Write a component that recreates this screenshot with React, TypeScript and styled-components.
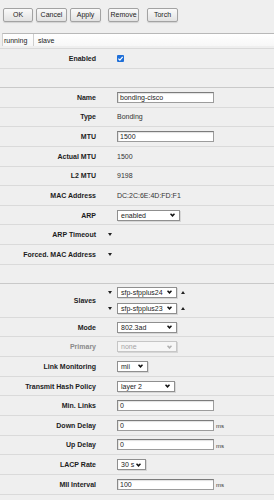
import React from "react";
import styled, { createGlobalStyle } from "styled-components";

const GlobalStyle = createGlobalStyle`
  html, body { margin: 0; padding: 0; }
  body {
    background: #efefef;
    font-family: "Liberation Sans", Arial, sans-serif;
    color: #222;
  }
`;

const Page = styled.div`
  width: 274px;
  height: 500px;
  overflow: hidden;
  background: #efefef;
`;

const Toolbar = styled.div`
  display: flex;
  align-items: flex-start;
  height: 33px;
  box-sizing: border-box;
  padding: 8px 0 0 3px;
`;

const Button = styled.button<{ $w?: number; $ml?: number }>`
  width: ${(p) => p.$w ?? 31}px;
  height: 14px;
  margin: 0 0 0 ${(p) => p.$ml ?? 0}px;
  padding: 0;
  box-sizing: border-box;
  border: 1px solid #a3a3a3;
  border-radius: 2px;
  background: linear-gradient(#fafafa, #e2e2e2);
  box-shadow: 0 1px 1px rgba(0, 0, 0, 0.12);
  font-family: "Liberation Sans", Arial, sans-serif;
  font-size: 7px;
  line-height: 12px;
  color: #222;
`;

const StatusBar = styled.div`
  display: flex;
  align-items: center;
  height: 13px;
  box-sizing: border-box;
  margin: 0 0 2px 2px;
  border-top: 1px solid #b8b8b8;
  border-left: 1px solid #d0d0d0;
  background: linear-gradient(#ffffff, #f7f7f7);
  font-size: 7px;
  color: #222;
`;

const StatusCell = styled.div<{ $w?: number; $sep?: boolean }>`
  height: 100%;
  display: flex;
  align-items: center;
  box-sizing: border-box;
  ${(p) => (p.$w ? `width: ${p.$w}px;` : "")}
  padding-left: ${(p) => (p.$sep ? 1 : 4)}px;
  border-right: ${(p) => (p.$sep ? "1px solid #cfcfcf" : "none")};
`;

const Form = styled.div`
  border-top: 1px solid #d9d9d9;
`;

const Row = styled.div<{ $h?: number; $strong?: boolean }>`
  display: grid;
  grid-template-columns: 96px 21px 1fr;
  align-items: center;
  height: ${(p) => p.$h ?? 19.65}px;
  box-sizing: border-box;
  border-bottom: 1px solid ${(p) => (p.$strong ? "#c9c9c9" : "#dadada")};
`;

const Label = styled.div<{ $disabled?: boolean }>`
  text-align: right;
  font-weight: bold;
  font-size: 7px;
  white-space: nowrap;
  color: ${(p) => (p.$disabled ? "#8a8a8a" : "#1c1c1c")};
`;

const Toggle = styled.div`
  display: flex;
  justify-content: flex-end;
  padding-right: 5px;
`;

const TriDown = styled.span`
  display: inline-block;
  width: 0;
  height: 0;
  border-left: 2.5px solid transparent;
  border-right: 2.5px solid transparent;
  border-top: 3px solid #222;
`;

const TriUp = styled.span`
  display: inline-block;
  width: 0;
  height: 0;
  border-left: 2.5px solid transparent;
  border-right: 2.5px solid transparent;
  border-bottom: 3px solid #222;
`;

const Value = styled.div`
  display: flex;
  align-items: center;
  gap: 2px;
  font-size: 7px;
  color: #333;
  white-space: nowrap;
`;

const TextInput = styled.div`
  width: 97px;
  height: 11px;
  box-sizing: border-box;
  border: 1px solid #9c9c9c;
  border-top-color: #7c7c7c;
  border-left-color: #8a8a8a;
  background: #fff;
  box-shadow: inset 1px 1px 1px rgba(0, 0, 0, 0.12);
  padding-left: 2px;
  font-size: 7px;
  line-height: 9px;
  color: #222;
`;

const Unit = styled.span`
  font-size: 6px;
  color: #333;
  margin-top: 2px;
`;

const SelectBox = styled.div<{ $w: number; $disabled?: boolean }>`
  width: ${(p) => p.$w}px;
  height: 11px;
  box-sizing: border-box;
  display: flex;
  align-items: center;
  justify-content: space-between;
  padding: 0 4px 0 3px;
  border: 1px solid ${(p) => (p.$disabled ? "#c6c6c6" : "#8f8f8f")};
  background: ${(p) => (p.$disabled ? "#f6f6f6" : "#fff")};
  box-shadow: 1px 1px 0 rgba(0, 0, 0, 0.1);
  font-size: 7px;
  color: ${(p) => (p.$disabled ? "#a5a5a5" : "#222")};
`;

const Check = styled.div`
  width: 7px;
  height: 7px;
  margin-top: -1px;
`;

const SlaveList = styled.div`
  grid-column: 2 / 4;
  display: flex;
  flex-direction: column;
  gap: 5px;
`;

const SlaveLine = styled.div`
  display: grid;
  grid-template-columns: 21px auto 1fr;
  align-items: center;
`;

const UpWrap = styled.div`
  padding-left: 4px;
  display: flex;
  align-items: center;
`;

const Chevron = ({ color }: { color: string }) => (
  <svg width="5" height="4" viewBox="0 0 5 4">
    <path d="M0.5 0.7 L2.5 2.8 L4.5 0.7" fill="none" stroke={color} strokeWidth="1.5" />
  </svg>
);

const Select = ({ w, text, disabled }: { w: number; text: string; disabled?: boolean }) => (
  <SelectBox $w={w} $disabled={disabled}>
    <span>{text}</span>
    <Chevron color={disabled ? "#b0b0b0" : "#111"} />
  </SelectBox>
);

export default function App() {
  return (
    <Page>
      <GlobalStyle />
      <Toolbar>
        <Button $w={30}>OK</Button>
        <Button $ml={3}>Cancel</Button>
        <Button $ml={3}>Apply</Button>
        <Button $ml={7}>Remove</Button>
        <Button $ml={8}>Torch</Button>
      </Toolbar>
      <StatusBar>
        <StatusCell $w={31} $sep>running</StatusCell>
        <StatusCell>slave</StatusCell>
      </StatusBar>
      <Form>
        <Row $h={20}>
          <Label>Enabled</Label>
          <span />
          <Value>
            <Check>
              <svg width="7" height="7" viewBox="0 0 7 7">
                <rect x="0" y="0" width="7" height="7" rx="1" fill="#1f6fd8" />
                <path d="M1.4 3.6 L2.9 5.1 L5.7 1.8" fill="none" stroke="#fff" strokeWidth="1.2" />
              </svg>
            </Check>
          </Value>
        </Row>
        <Row $h={19} $strong />
        <Row>
          <Label>Name</Label>
          <span />
          <Value>
            <TextInput>bonding-cisco</TextInput>
          </Value>
        </Row>
        <Row>
          <Label>Type</Label>
          <span />
          <Value>Bonding</Value>
        </Row>
        <Row>
          <Label>MTU</Label>
          <span />
          <Value>
            <TextInput>1500</TextInput>
          </Value>
        </Row>
        <Row>
          <Label>Actual MTU</Label>
          <span />
          <Value>1500</Value>
        </Row>
        <Row>
          <Label>L2 MTU</Label>
          <span />
          <Value>9198</Value>
        </Row>
        <Row>
          <Label>MAC Address</Label>
          <span />
          <Value>DC:2C:6E:4D:FD:F1</Value>
        </Row>
        <Row>
          <Label>ARP</Label>
          <span />
          <Value>
            <Select w={63} text="enabled" />
          </Value>
        </Row>
        <Row>
          <Label>ARP Timeout</Label>
          <Toggle>
            <TriDown />
          </Toggle>
          <Value />
        </Row>
        <Row>
          <Label>Forced. MAC Address</Label>
          <Toggle>
            <TriDown />
          </Toggle>
          <Value />
        </Row>
        <Row $h={19} $strong />
        <Row $h={34}>
          <Label>Slaves</Label>
          <SlaveList>
            <SlaveLine>
              <Toggle>
                <TriDown />
              </Toggle>
              <Select w={60} text="sfp-sfpplus24" />
              <UpWrap>
                <TriUp />
              </UpWrap>
            </SlaveLine>
            <SlaveLine>
              <Toggle>
                <TriDown />
              </Toggle>
              <Select w={60} text="sfp-sfpplus23" />
              <UpWrap>
                <TriUp />
              </UpWrap>
            </SlaveLine>
          </SlaveList>
        </Row>
        <Row>
          <Label>Mode</Label>
          <span />
          <Value>
            <Select w={60} text="802.3ad" />
          </Value>
        </Row>
        <Row>
          <Label $disabled>Primary</Label>
          <span />
          <Value>
            <Select w={60} text="none" disabled />
          </Value>
        </Row>
        <Row>
          <Label>Link Monitoring</Label>
          <span />
          <Value>
            <Select w={31} text="mii" />
          </Value>
        </Row>
        <Row>
          <Label>Transmit Hash Policy</Label>
          <span />
          <Value>
            <Select w={58} text="layer 2" />
          </Value>
        </Row>
        <Row>
          <Label>Min. Links</Label>
          <span />
          <Value>
            <TextInput>0</TextInput>
          </Value>
        </Row>
        <Row>
          <Label>Down Delay</Label>
          <span />
          <Value>
            <TextInput>0</TextInput>
            <Unit>ms</Unit>
          </Value>
        </Row>
        <Row>
          <Label>Up Delay</Label>
          <span />
          <Value>
            <TextInput>0</TextInput>
            <Unit>ms</Unit>
          </Value>
        </Row>
        <Row>
          <Label>LACP Rate</Label>
          <span />
          <Value>
            <Select w={29} text="30 s" />
          </Value>
        </Row>
        <Row>
          <Label>MII Interval</Label>
          <span />
          <Value>
            <TextInput>100</TextInput>
            <Unit>ms</Unit>
          </Value>
        </Row>
      </Form>
    </Page>
  );
}
